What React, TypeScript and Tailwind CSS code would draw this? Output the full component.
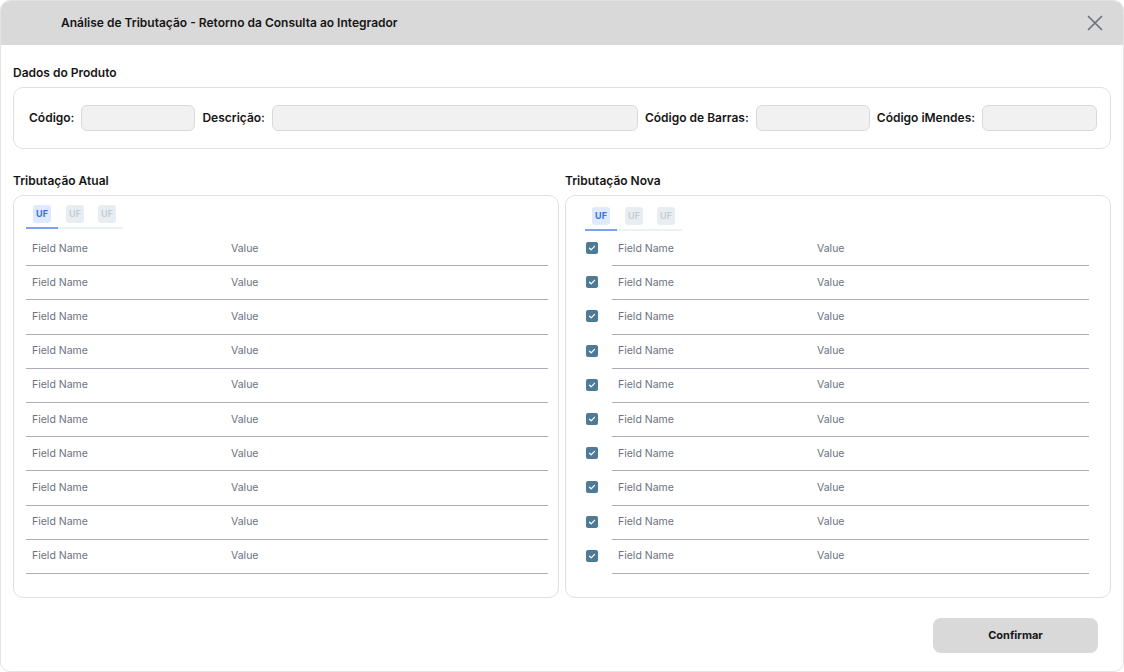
import { X } from "lucide-react";

const rows = Array.from({ length: 10 }, (_, i) => i);

function Tabs() {
    return (
        <div className="flex w-[97px] border-b-2 border-[#eef1f4]">
            <div className="w-[32px] pl-[7px] pb-[4px] border-b-2 border-[#7ea3ee] -mb-[2px]">
                <div className="w-[18px] h-[18px] rounded-[3px] bg-[#dfe9ff] text-[#3a6fe0] text-[9px] font-bold flex items-center justify-center">UF</div>
            </div>
            <div className="w-[32px] pl-[8px] pb-[4px]">
                <div className="w-[18px] h-[18px] rounded-[3px] bg-[#e8edf1] text-[#c3cbd3] text-[9px] font-semibold flex items-center justify-center">UF</div>
            </div>
            <div className="w-[32px] pl-[8px] pb-[4px]">
                <div className="w-[18px] h-[18px] rounded-[3px] bg-[#e8edf1] text-[#c3cbd3] text-[9px] font-semibold flex items-center justify-center">UF</div>
            </div>
        </div>
    );
}

function Check() {
    return (
        <div className="w-[12px] h-[12px] rounded-[2px] bg-[#4d7a96] flex items-center justify-center">
            <svg width="8" height="8" viewBox="0 0 8 8" fill="none">
                <path d="M1.5 4.2 L3.2 5.8 L6.5 2.3" stroke="white" strokeWidth="1.2" strokeLinecap="round" strokeLinejoin="round" />
            </svg>
        </div>
    );
}

function Field({ label, w }: { label: string; w: string }) {
    return (
        <div className="flex items-center gap-[7px]">
            <span className="text-[12px] font-semibold text-[#161616] whitespace-nowrap">{label}</span>
            <div className={`${w} h-[26px] rounded-[6px] bg-[#f1f1f1] border border-[#d9d9d9]`} />
        </div>
    );
}

export default function App() {
    return (
        <div className="w-[1124px] h-[672px] bg-white" style={{ fontFamily: "Inter, 'Noto Sans', sans-serif" }}>
            <div className="w-full h-full rounded-[10px] border border-[#e3e3e3] overflow-hidden flex flex-col">
                <div className="h-[44px] bg-[#d9d9d9] flex items-center justify-between pl-[60px] pr-[15px] shrink-0">
                    <h1 className="text-[12px] font-semibold text-[#161616]">Análise de Tributação - Retorno da Consulta ao Integrador</h1>
                    <X size={26} strokeWidth={1.6} className="text-[#6b7280]" />
                </div>

                <div className="px-[12px] pt-[20px] flex flex-col">
                    <h2 className="text-[12px] font-semibold text-[#161616] leading-[16px]">Dados do Produto</h2>
                    <div className="mt-[6px] h-[62px] rounded-[10px] border border-[#e0e0e0] flex items-center gap-[7px] pl-[15px] pr-[14px]">
                        <Field label="Código:" w="w-[114px]" />
                        <Field label="Descrição:" w="w-[366px]" />
                        <Field label="Código de Barras:" w="w-[114px]" />
                        <Field label="Código iMendes:" w="w-[115px]" />
                    </div>

                    <div className="mt-[24px] flex gap-[6px]">
                        <div className="w-[546px] flex flex-col">
                            <h2 className="text-[12px] font-semibold text-[#161616] leading-[16px]">Tributação Atual</h2>
                            <div className="mt-[6px] h-[403px] rounded-[10px] border border-[#e0e0e0] pl-[12px] pr-[10px] pt-[9px]">
                                <Tabs />
                                <div className="mt-[3px]">
                                    {rows.map((i) => (
                                        <div key={i} className="h-[34.2px] border-b border-[#a9adb8] flex items-center text-[10.5px] text-[#6b7280]">
                                            <span className="pl-[6px] w-[205px]">Field Name</span>
                                            <span>Value</span>
                                        </div>
                                    ))}
                                </div>
                            </div>
                        </div>
                        <div className="w-[546px] flex flex-col">
                            <h2 className="text-[12px] font-semibold text-[#161616] leading-[16px]">Tributação Nova</h2>
                            <div className="mt-[6px] h-[403px] rounded-[10px] border border-[#e0e0e0] pl-[19px] pr-[21px] pt-[11px]">
                                <Tabs />
                                <div className="mt-[1px]">
                                    {rows.map((i) => (
                                        <div key={i} className="h-[34.2px] flex items-center">
                                            <div className="w-[27px] pl-[1px] -mt-[2px]">
                                                <Check />
                                            </div>
                                            <div className="flex-1 h-full border-b border-[#a9adb8] flex items-center text-[10.5px] text-[#6b7280]">
                                                <span className="pl-[6px] w-[205px]">Field Name</span>
                                                <span>Value</span>
                                            </div>
                                        </div>
                                    ))}
                                </div>
                            </div>
                        </div>
                    </div>

                    <div className="flex justify-end mt-[20px] pr-[13px]">
                        <button className="w-[165px] h-[35px] rounded-[8px] bg-[#d9d9d9] text-[11px] font-bold text-[#161616]">Confirmar</button>
                    </div>
                </div>
            </div>
        </div>
    );
}
